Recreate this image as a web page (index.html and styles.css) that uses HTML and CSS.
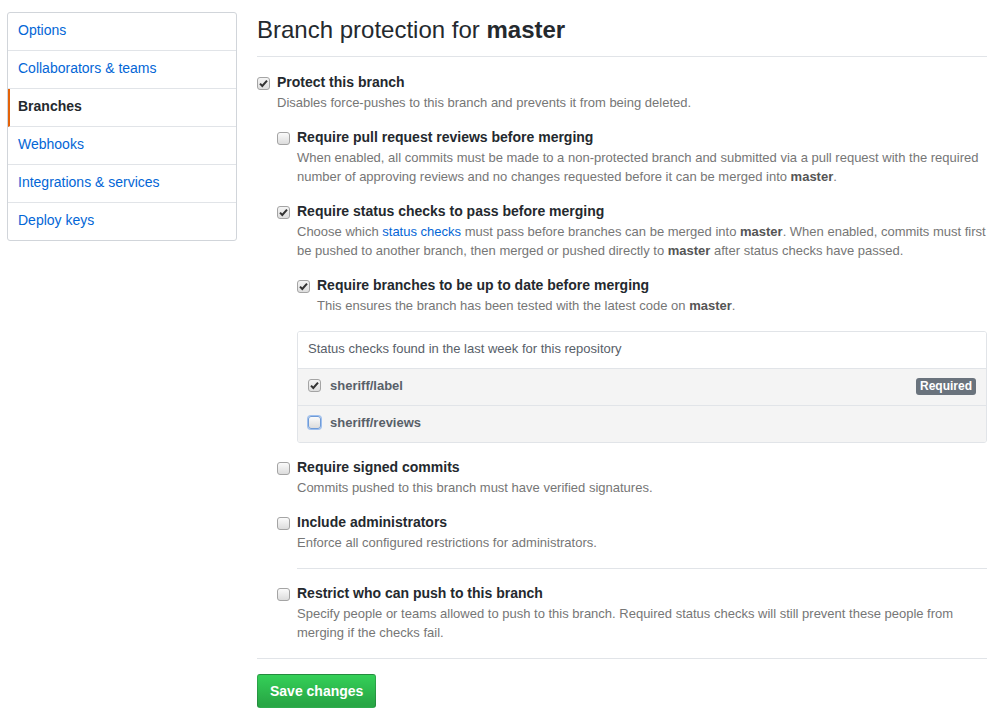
FILE: index.html
```html
<!DOCTYPE html>
<html lang="en">
<head>
<meta charset="utf-8">
<title>Branch protection for master</title>
<link rel="stylesheet" href="styles.css">
</head>
<body>
<div class="page">
  <nav class="menu">
    <a class="menu-item" href="#">Options</a>
    <a class="menu-item" href="#">Collaborators &amp; teams</a>
    <a class="menu-item selected" href="#">Branches</a>
    <a class="menu-item" href="#">Webhooks</a>
    <a class="menu-item" href="#">Integrations &amp; services</a>
    <a class="menu-item last" href="#">Deploy keys</a>
  </nav>

  <main class="main">
    <h2 class="subhead">Branch protection for <strong>master</strong></h2>

    <div class="check">
      <span class="cb checked"><svg width="11" height="11" viewBox="0 0 11 11"><path d="M2 5.6 L4.3 8 L9 2.6" fill="none" stroke="#333" stroke-width="2"/></svg></span>
      <div class="body">
        <div class="label">Protect this branch</div>
        <p class="note">Disables force-pushes to this branch and prevents it from being deleted.</p>

        <div class="options">
          <div class="check">
            <span class="cb"></span>
            <div class="body">
              <div class="label">Require pull request reviews before merging</div>
              <p class="note">When enabled, all commits must be made to a non-protected branch and submitted via a pull request with the required number of approving reviews and no changes requested before it can be merged into <strong>master</strong>.</p>
            </div>
          </div>

          <div class="check with-box">
            <span class="cb checked"><svg width="11" height="11" viewBox="0 0 11 11"><path d="M2 5.6 L4.3 8 L9 2.6" fill="none" stroke="#333" stroke-width="2"/></svg></span>
            <div class="body">
              <div class="label">Require status checks to pass before merging</div>
              <p class="note">Choose which <a href="#">status checks</a> must pass before branches can be merged into <strong>master</strong>. When enabled, commits must first be pushed to another branch, then merged or pushed directly to <strong>master</strong> after status checks have passed.</p>

              <div class="check">
                <span class="cb checked"><svg width="11" height="11" viewBox="0 0 11 11"><path d="M2 5.6 L4.3 8 L9 2.6" fill="none" stroke="#333" stroke-width="2"/></svg></span>
                <div class="body">
                  <div class="label">Require branches to be up to date before merging</div>
                  <p class="note">This ensures the branch has been tested with the latest code on <strong>master</strong>.</p>
                </div>
              </div>

              <div class="status-box">
                <div class="status-head">Status checks found in the last week for this repository</div>
                <div class="status-row">
                  <span class="cb checked small"><svg width="11" height="11" viewBox="0 0 11 11"><path d="M2 5.6 L4.3 8 L9 2.6" fill="none" stroke="#333" stroke-width="2"/></svg></span>
                  <span class="context">sheriff/label</span>
                  <span class="badge">Required</span>
                </div>
                <div class="status-row">
                  <span class="cb focus"></span>
                  <span class="context">sheriff/reviews</span>
                </div>
              </div>
            </div>
          </div>

          <div class="check after-box">
            <span class="cb"></span>
            <div class="body">
              <div class="label">Require signed commits</div>
              <p class="note">Commits pushed to this branch must have verified signatures.</p>
            </div>
          </div>

          <div class="check">
            <span class="cb"></span>
            <div class="body">
              <div class="label">Include administrators</div>
              <p class="note">Enforce all configured restrictions for administrators.</p>
            </div>
          </div>

          <hr class="sep inner">

          <div class="check last">
            <span class="cb"></span>
            <div class="body">
              <div class="label">Restrict who can push to this branch</div>
              <p class="note">Specify people or teams allowed to push to this branch. Required status checks will still prevent these people from merging if the checks fail.</p>
            </div>
          </div>
        </div>
      </div>
    </div>

    <hr class="sep">

    <button class="btn-primary" type="button">Save changes</button>
  </main>
</div>
</body>
</html>
```

FILE: styles.css
```css
* { box-sizing: border-box; }

body {
  margin: 0;
  background: #fff;
  color: #24292e;
  font-family: "Liberation Sans", Arial, Helvetica, sans-serif;
  font-size: 14px;
  line-height: 21px;
}

a { color: #0366d6; text-decoration: none; }

.page {
  display: flex;
  align-items: flex-start;
  gap: 20px;
  padding: 12px 0 0 7px;
}

/* Sidebar menu */
.menu {
  width: 230px;
  flex: none;
  border: 1px solid #d1d5da;
  border-radius: 3px;
  display: flex;
  flex-direction: column;
}

.menu-item {
  display: block;
  padding: 7px 10px 9px;
  border-bottom: 1px solid #e1e4e8;
  color: #0366d6;
}

.menu-item.last { border-bottom: 0; }

.menu-item.selected {
  font-weight: bold;
  color: #24292e;
  border-left: 2px solid #e36209;
  padding-left: 8px;
}

/* Main */
.main {
  width: 730px;
  flex: none;
}

.subhead {
  margin: -1px 0 15px;
  padding-bottom: 8px;
  border-bottom: 1px solid #e1e4e8;
  font-size: 24px;
  line-height: 37px;
  font-weight: normal;
  color: #24292e;
}

.subhead strong { font-weight: bold; }

.check {
  display: flex;
  align-items: flex-start;
  margin: 15px 0;
}

.main > .check { margin-top: 0; margin-bottom: 0; }
.check.last { margin: 14px 0 0; }
.check.with-box { margin-bottom: 14px; }
.check.after-box { margin-top: 14px; }

.check > .cb {
  margin: 5px 7px 0 0;
}

.body { flex: 1; min-width: 0; }

.label {
  font-weight: bold;
  font-size: 14px;
  line-height: 21px;
  color: #24292e;
}

.note {
  margin: 0;
  font-size: 13px;
  line-height: 19px;
  color: #767676;
}

.note strong { color: #555; }

.options { margin-top: 15px; }
.options > .check:first-child { margin-top: 0; }

/* Checkbox */
.cb {
  flex: none;
  display: inline-flex;
  align-items: center;
  justify-content: center;
  width: 13px;
  height: 13px;
  border: 1px solid #a4a4a4;
  border-radius: 3px;
  background: linear-gradient(#fbfbfb, #dcdcdc);
}

.cb.checked {
  background: linear-gradient(#f4f4f4, #dedede);
}

.cb.focus {
  border-color: #6f9bd8;
  box-shadow: 0 0 0 1px #9fc0ee;
}

/* Status checks box */
.status-box {
  margin-top: 16px;
  border: 1px solid #e1e4e8;
  border-radius: 3px;
  overflow: hidden;
}

.status-head {
  padding: 7px 10px 9px;
  font-size: 13px;
  line-height: 20px;
  color: #586069;
  background: #fff;
}

.status-row {
  display: flex;
  align-items: center;
  gap: 9px;
  padding: 7px 10px 9px;
  border-top: 1px solid #e1e4e8;
  background: #f4f4f4;
  line-height: 20px;
}

.status-row .cb { margin-top: -2px; }

.context {
  flex: 1;
  font-weight: bold;
  font-size: 13px;
  color: #586069;
}

.badge {
  display: inline-block;
  padding: 2px 4px;
  border-radius: 3px;
  background: #6a737d;
  color: #fff;
  font-size: 12px;
  font-weight: bold;
  line-height: 13px;
}

/* Separators */
.sep {
  margin: 16px 0 15px;
  border: 0;
  height: 1px;
  background: #e1e4e8;
}

.sep.inner { margin: 16px 0 0 20px; }

/* Button */
.btn-primary {
  display: inline-block;
  padding: 6px 12px;
  font-family: inherit;
  font-size: 14px;
  font-weight: bold;
  line-height: 20px;
  color: #fff;
  background: linear-gradient(#34d058, #28a745 90%);
  border: 1px solid rgba(27, 31, 35, 0.2);
  border-radius: 3px;
  cursor: pointer;
}
```
